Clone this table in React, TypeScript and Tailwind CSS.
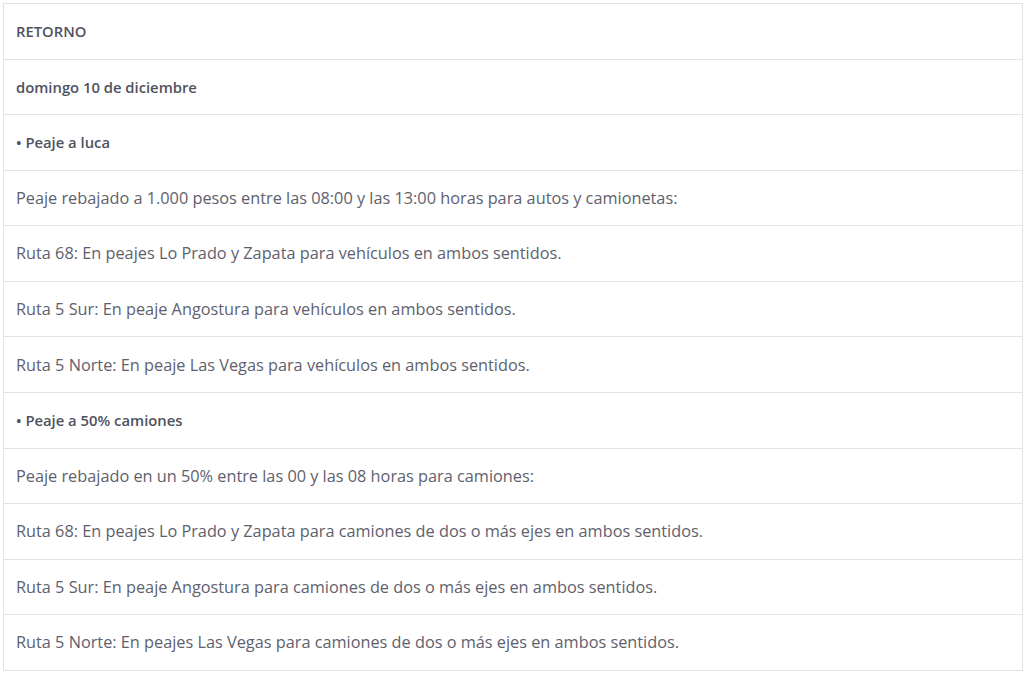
import React from "react";

const rows: { t: string; b?: boolean }[] = [
  { t: "RETORNO", b: true },
  { t: "domingo 10 de diciembre", b: true },
  { t: "• Peaje a luca", b: true },
  { t: "Peaje rebajado a 1.000 pesos entre las 08:00 y las 13:00 horas para autos y camionetas:" },
  { t: "Ruta 68: En peajes Lo Prado y Zapata para vehículos en ambos sentidos." },
  { t: "Ruta 5 Sur: En peaje Angostura para vehículos en ambos sentidos." },
  { t: "Ruta 5 Norte: En peaje Las Vegas para vehículos en ambos sentidos." },
  { t: "• Peaje a 50% camiones", b: true },
  { t: "Peaje rebajado en un 50% entre las 00 y las 08 horas para camiones:" },
  { t: "Ruta 68: En peajes Lo Prado y Zapata para camiones de dos o más ejes en ambos sentidos." },
  { t: "Ruta 5 Sur: En peaje Angostura para camiones de dos o más ejes en ambos sentidos." },
  { t: "Ruta 5 Norte: En peajes Las Vegas para camiones de dos o más ejes en ambos sentidos." },
];

export default function App() {
  return (
    <div className="w-[1029px] h-[679px] bg-white pt-[3px] pl-[3px]" style={{ fontFamily: '"Open Sans", "Noto Sans", sans-serif' }}>
      <div className="w-[1020px] border-t border-l border-r border-[#e3e3e3]">
        {rows.map((r, i) => (
          <div key={i} className="h-[55.58px] border-b border-[#e3e3e3] flex items-center pl-[12px]">
            {r.b ? (
              <span className="text-[14.8px] font-semibold text-[#4f525e]">{r.t}</span>
            ) : (
              <span className="text-[16.3px] text-[#5e616d]">{r.t}</span>
            )}
          </div>
        ))}
      </div>
    </div>
  );
}
